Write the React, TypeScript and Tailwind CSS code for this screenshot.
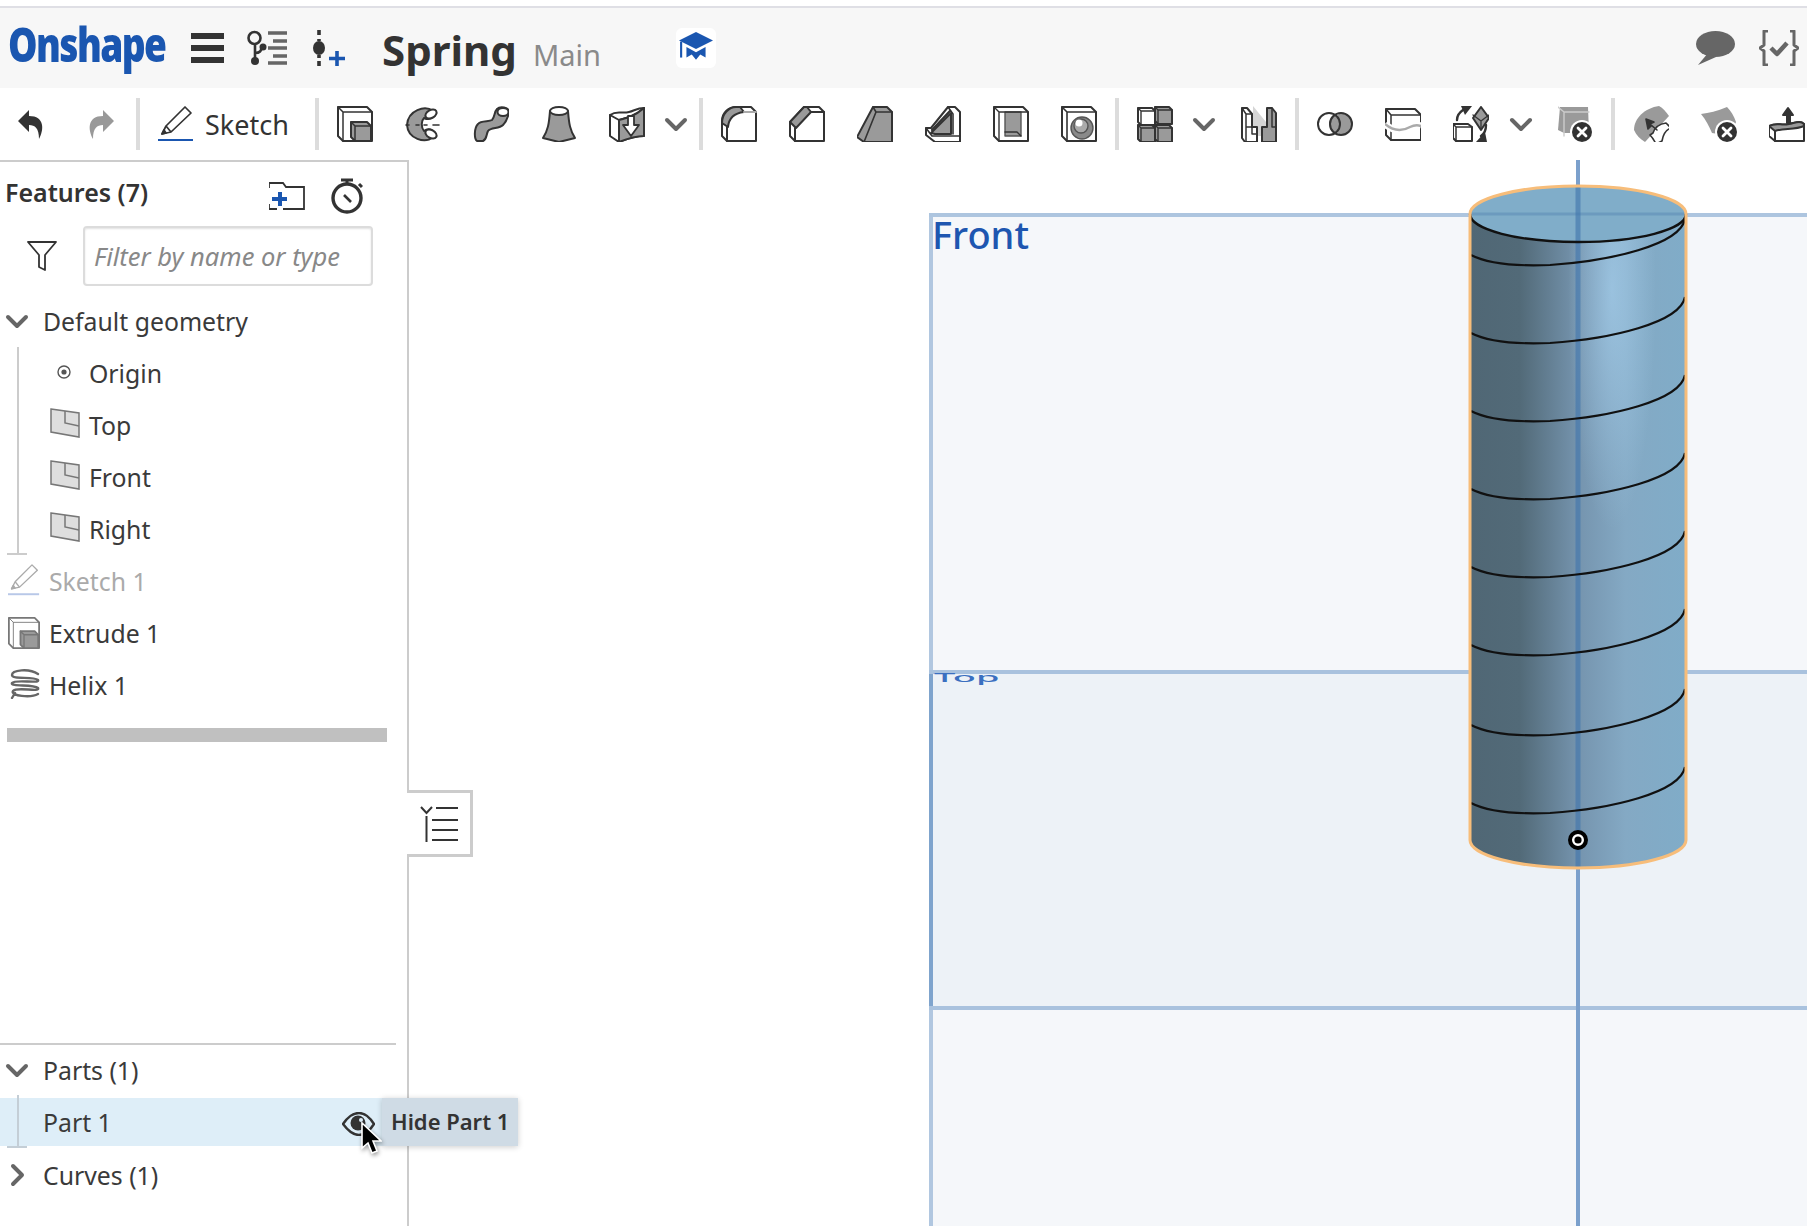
const S = "#333";
const G = "#9a9a9a";

function Ic({ children, w = 36, h = 36, vb = "0 0 36 36" }: { children: React.ReactNode; w?: number; h?: number; vb?: string }) {
  return (
    <svg width={w} height={h} viewBox={vb} fill="none" stroke={S} strokeWidth="2" strokeLinejoin="round" strokeLinecap="round">
      {children}
    </svg>
  );
}

function Slot({ children, className = "" }: { children: React.ReactNode; className?: string }) {
  return <div className={`w-[68px] h-9 shrink-0 flex items-center justify-center ${className}`}>{children}</div>;
}

function Sep({ className = "" }: { className?: string }) {
  return <div className={`w-1 h-[52px] shrink-0 bg-[#dcdcdc] ${className}`} />;
}

function Chev({ size = 30, className = "" }: { size?: number; className?: string }) {
  return (
    <svg width={size} height={size} viewBox="0 0 30 30" fill="none" className={`shrink-0 ${className}`}>
      <path d="M6 11l9 9 9-9" stroke="#666" strokeWidth="4" strokeLinecap="round" strokeLinejoin="round" />
    </svg>
  );
}

function ExtrudeIcon({ size = 36, light = false }: { size?: number; light?: boolean }) {
  const c = light ? "#777" : S;
  return (
    <Ic w={size} h={size}>
      <g stroke={c}>
        <path d="M6 35 L1 30 V1 H30 L35 6 V35 Z" fill="#fff" />
        <path d="M1 1 L6 6 H35 M6 6 V35" strokeWidth={light ? 1 : 1.5} />
        <path d="M14 16 H30 L34 20 V35 H18 L14 31 Z" fill={G} />
        <path d="M14 16 L18 20 H34 M18 20 V35" strokeWidth="1.5" />
      </g>
    </Ic>
  );
}

function RevolveIcon() {
  return (
    <Ic>
      <path d="M28 5 C20 -1 3 4 2 19 C3 33 20 38 28 31 C33 25 24 21 19 25 C16 21 16 15 19 12 C25 15 34 10 28 5 Z" fill={G} />
      <ellipse cx="26" cy="8" rx="6" ry="4" fill="#fff" transform="rotate(-30 26 8)" />
      <ellipse cx="26" cy="28" rx="6" ry="4" fill="#fff" transform="rotate(30 26 28)" />
      <path d="M1 19 H4 M11 19 H14 M19 19 H22 M28 19 H34" strokeWidth="1.6" />
    </Ic>
  );
}

function SweepIcon() {
  return (
    <Ic>
      <path d="M4 35 C1 33 1 22 5 18 C8 14 16 16 19 14 C22 11 21 6 24 3 C27 0 36 1 36 6 C35 11 33 16 30 19 C26 23 18 21 15 25 C13 29 14 33 10 35 Z" fill={G} />
      <ellipse cx="30" cy="6" rx="5.5" ry="4" fill="#fff" />
    </Ic>
  );
}

function LoftIcon() {
  return (
    <Ic>
      <path d="M9 5 C8 18 7 24 2 32 L18 36 L34 32 C29 24 28 18 27 5 Z" fill={G} />
      <ellipse cx="18" cy="5" rx="9" ry="4" fill="#fff" />
    </Ic>
  );
}

function ThickenIcon() {
  return (
    <Ic>
      <path d="M1 9 L10 14 C18 12 26 10 35 2 V30 C28 30 20 32 10 36 L1 30 Z" fill="#fff" />
      <path d="M10 14 C18 12 26 10 35 2 V30 C28 30 20 32 10 36 Z" fill={G} />
      <path d="M1 9 C8 4 12 8 20 6 C25 5 28 2 35 2" />
      <path d="M19 10 H25 V19 H30 L22 30 L14 19 H19 Z" fill="#fff" strokeWidth="1.8" />
    </Ic>
  );
}

function FilletIcon() {
  return (
    <Ic>
      <path d="M6 35 L1 30 V15 C1 6 8 1 15 1 H30 L35 6 V35 Z" fill="#fff" />
      <path d="M1 17 C1 8 8 1 15 1 H19 L23 6 C14 7 8 11 7 21 Z" fill={G} />
      <path d="M6 35 V21" />
      <path d="M23 6 H35" stroke="#aaa" />
    </Ic>
  );
}

function ChamferIcon() {
  return (
    <Ic>
      <path d="M6 35 L1 30 V16 L15 1 H30 L35 6 V35 Z" fill="#fff" />
      <path d="M1 16 L15 1 H18 L22 6 L7 22 Z" fill={G} />
      <path d="M6 35 V22 M22 6 H35" />
    </Ic>
  );
}

function DraftIcon() {
  return (
    <Ic>
      <path d="M0 31 L16 1 H30 L35 6 V36 H7 Z" fill={G} />
      <path d="M7 36 L19 6 H35 M16 1 L19 6" strokeWidth="1.6" />
    </Ic>
  );
}

function RibIcon() {
  return (
    <Ic>
      <path d="M10 36 L1 29 V22 H6 L23 1 H30 L35 6 V36 Z" fill="#fff" />
      <path d="M6 27 L26 7 V28 H10 Z" fill={G} />
      <path d="M23 1 L28 8 V28 M1 22 L7 30 H35" strokeWidth="1.6" />
      <path d="M7 24 L25 5" strokeWidth="2.4" />
    </Ic>
  );
}

function ShellIcon() {
  return (
    <Ic>
      <path d="M6 35 L1 30 V1 H30 L35 6 V35 Z" fill="#fff" />
      <path d="M12 6 H28 V30 H12 Z" fill={G} stroke="#555" strokeWidth="1.4" />
      <path d="M1 1 L6 6 H35 M6 6 V35 M28 30 L24 26 H12" strokeWidth="1.4" />
    </Ic>
  );
}

function HoleIcon() {
  return (
    <Ic>
      <path d="M6 35 L1 30 V1 H30 L35 6 V35 Z" fill="#fff" />
      <path d="M1 1 L6 6 H35 M6 6 V35" strokeWidth="1.6" />
      <circle cx="21" cy="22" r="11" fill="#8a8a8a" stroke="#555" strokeWidth="1.4" />
      <circle cx="20" cy="20" r="7" fill="#aaa" stroke="#555" strokeWidth="1.4" />
      <circle cx="18" cy="17" r="3.5" fill="#fff" stroke="none" />
    </Ic>
  );
}

function PatternIcon() {
  const cube = (x: number, y: number, fill: string) => (
    <g key={`${x}${y}`} transform={`translate(${x} ${y})`}>
      <path d="M3 17 L0 14 V0 H14 L17 3 V17 Z" fill={fill} />
      <path d="M0 0 L3 3 H17 M3 3 V17" strokeWidth="1.4" />
    </g>
  );
  return <Ic>{[cube(1, 2, "#fff"), cube(18, 1, G), cube(1, 19, G), cube(18, 19, G)]}</Ic>;
}

function MirrorIcon() {
  return (
    <Ic>
      <path d="M12 0 L25 16 V30 H12 Z" fill="#d5d5d5" stroke="none" />
      <path d="M4 36 L1 32 V2 H6 L11 8 V21 H16 V36 Z" fill="#fff" />
      <path d="M1 2 L5 8 H11 M5 8 V36 M5 21 H11 M11 21 V28 H16" strokeWidth="1.5" />
      <path d="M21 36 V21 H26 V2 H31 L35 7 V36 Z" fill={G} />
      <path d="M31 2 V21 H35" strokeWidth="1.5" />
    </Ic>
  );
}

function BooleanIcon() {
  return (
    <Ic>
      <path d="M18 8 C22 10 24 14 24 18 C24 22 22 26 18 28 C14 26 12 22 12 18 C12 14 14 10 18 8 Z" fill={G} stroke="none" />
      <path d="M24 7 A11 11 0 0 1 24 29 C20 27 18 23 18 18 C18 13 20 9 24 7 Z" fill={G} stroke="none" />
      <circle cx="12" cy="18" r="11" />
      <circle cx="24" cy="18" r="11" />
    </Ic>
  );
}

function SplitIcon() {
  return (
    <Ic>
      <path d="M6 34 L1 29 V3 H30 L36 9 V34 Z" fill="#fff" />
      <path d="M1 3 L6 9 H36 M6 9 V34" strokeWidth="1.5" />
      <path d="M0 18 C10 27 20 24 25 21 C29 19 33 19 36 20" stroke="#fff" strokeWidth="7" strokeLinecap="butt" />
      <path d="M0 18 C10 27 20 24 25 21 C29 19 33 19 36 20" stroke="#aaa" strokeWidth="2.4" />
    </Ic>
  );
}

function TransformIcon() {
  return (
    <Ic>
      <path d="M20 12 L28 1 L36 12 L28 24 Z" fill={G} />
      <path d="M20 9 L28 15 L36 9 M28 15 V22" strokeWidth="1.3" />
      <path d="M3 35 L0 32 V18 H15 L19 21 V35 Z" fill="#fff" />
      <path d="M0 18 L3 21 H19 M3 21 V35" strokeWidth="1.5" />
      <path d="M4 14 C4 9 7 6 10 4" strokeWidth="2.4" />
      <path d="M8 0 H19 L12 9 Z" fill={S} stroke="none" />
      <path d="M33 19 C33 25 31 28 28 30" strokeWidth="2.4" />
      <path d="M23 36 H34 L32 26 Z" fill={S} stroke="none" />
    </Ic>
  );
}

function XBadge({ cx, cy, r = 10 }: { cx: number; cy: number; r?: number }) {
  return (
    <g>
      <circle cx={cx} cy={cy} r={r + 2} fill="#fff" stroke="none" />
      <circle cx={cx} cy={cy} r={r} fill="#333" stroke="none" />
      <path d={`M${cx - 4} ${cy - 4}l8 8M${cx + 4} ${cy - 4}l-8 8`} stroke="#fff" strokeWidth="2.8" />
    </g>
  );
}

function DeleteIcon() {
  return (
    <Ic>
      <path d="M2 1 H30 L31 27 H6 L0 24 Z" fill={G} stroke="none" />
      <path d="M0 1 L6 6 H31 M6 6 V30" stroke="#ccc" strokeWidth="1.4" />
      <XBadge cx={24} cy={26} />
    </Ic>
  );
}

function ModifyFaceIcon() {
  return (
    <Ic>
      <path d="M1 24 C1 12 12 2 26 0 C30 2 33 6 36 10 L12 36 C7 33 3 29 1 24 Z" fill={G} stroke="none" />
      <path d="M20 27 C22 21 26 18 33 17 L38 22 C32 24 30 29 29 35 L23 38 C21 34 19 31 17 29 Z" fill="#fff" strokeWidth="1.6" />
      <path d="M24 24 L17 18 L21 16 L13 13 L15 23 L18 20" fill={S} strokeWidth="1.6" />
    </Ic>
  );
}

function DeleteFaceIcon() {
  return (
    <Ic>
      <path d="M0 8 C8 7 16 5 26 1 C30 5 33 10 35 16 L30 30 L11 27 C8 20 5 14 0 8 Z" fill={G} stroke="none" />
      <XBadge cx={26} cy={26} />
    </Ic>
  );
}

function MoveFaceIcon() {
  return (
    <Ic>
      <path d="M0 20 C8 16 12 20 20 18 C26 17 31 14 35 18 V35 H6 L0 30 Z" fill="#fff" />
      <path d="M0 20 L6 25 C14 22 26 24 35 20 V18 C31 14 26 17 20 18 C12 20 8 16 0 20 Z" fill={G} />
      <path d="M6 25 V35" />
      <path d="M18 17 V9 H14 L19 2 L24 9 H21 V17 Z" fill={S} />
    </Ic>
  );
}

function PencilIcon({ color = S, line = "#1a56b0", size = 36, width = 1.7 }: { color?: string; line?: string; size?: number; width?: number }) {
  return (
    <svg width={size} height={size} viewBox="0 0 36 36" fill="none" stroke={color} strokeWidth={width} strokeLinejoin="round">
      <path d="M4 28 L8 20 L27 1 L33 7 L13 26 Z" />
      <path d="M8 20 L13 26" />
      <path d="M4 28 L6 24 L8 27 Z" fill={color} />
      <path d="M0 34 H35" stroke={line} strokeWidth="2.2" />
    </svg>
  );
}

function PlaneIcon() {
  return (
    <svg width="30" height="30" viewBox="0 0 30 30">
      <path d="M1 1 L29 5 V29 L1 24 Z" fill="#dedede" stroke="#777" strokeWidth="1.5" />
      <path d="M15 3 V15 L29 18" fill="none" stroke="#777" strokeWidth="1.5" />
    </svg>
  );
}

function HelixIcon() {
  return (
    <svg width="32" height="30" viewBox="0 0 32 30" fill="none" stroke="#666" strokeWidth="2.4" strokeLinecap="round">
      <path d="M29 5 C20 -1 3 1 3 6 C3 11 24 7 29 11 C31 15 6 10 3 14 C1 18 24 15 29 19 C31 24 8 17 4 22 C1 27 22 29 29 25 M3 29 L6 24" />
    </svg>
  );
}

function TreeRow({ label, icon }: { label: string; icon?: React.ReactNode }) {
  return (
    <div className="h-[52px] flex items-center">
      {icon}
      <span>{label}</span>
    </div>
  );
}

function TreeLine() {
  return (
    <>
      <div className="absolute left-[17px] top-0 bottom-0 w-[2px] bg-[#ccc]" />
      <div className="absolute left-[7px] bottom-0 w-[20px] h-[2px] bg-[#ccc]" />
    </>
  );
}

function Viewport() {
  const lefts = [255, 333, 411, 489, 567, 645, 725, 803];
  return (
    <svg className="flex-1 h-full" viewBox="409 160 1398 1066" preserveAspectRatio="xMinYMin slice">
      <defs>
        <linearGradient id="cyl" x1="1470" x2="1686" y1="0" y2="0" gradientUnits="userSpaceOnUse">
          <stop offset="0" stopColor="#506775" />
          <stop offset="0.23" stopColor="#526a78" />
          <stop offset="0.5" stopColor="#7594ae" />
          <stop offset="0.72" stopColor="#84a9c4" />
          <stop offset="1" stopColor="#80acc8" />
        </linearGradient>
        <radialGradient id="shine" cx="1612" cy="290" r="1" gradientUnits="userSpaceOnUse" gradientTransform="translate(1612 290) scale(44 240) translate(-1612 -290)">
          <stop offset="0" stopColor="#b4e0ff" stopOpacity="0.5" />
          <stop offset="1" stopColor="#b4e0ff" stopOpacity="0" />
        </radialGradient>
      </defs>
      <rect x="931" y="215" width="900" height="1020" fill="#f5f7fa" />
      <rect x="931" y="672" width="900" height="336" fill="#edf2f7" />
      <path d="M931 213 V1230" stroke="#b1c7e0" strokeWidth="4" />
      <path d="M931 672 V1009" stroke="#7fa4cd" strokeWidth="4" />
      <path d="M929 215 H1810" stroke="#adc5df" strokeWidth="4" />
      <path d="M929 672 H1810" stroke="#a9c2de" strokeWidth="4" />
      <path d="M929 1008 H1810" stroke="#a9c2de" strokeWidth="4" />
      <path d="M1578 160 V1230" stroke="#7ba0cc" strokeWidth="4" />
      <text x="932" y="249" fontFamily="'Noto Sans', sans-serif" fontSize="38" fontWeight="500" fill="#1e56b0">Front</text>
      <text transform="translate(934 682) scale(1 0.32)" fontFamily="'Noto Sans', sans-serif" fontSize="38" fontWeight="500" fill="#3a6fc0">Top</text>

      <path d="M1470 214 A108 28 0 0 1 1686 214 V840 A108 28 0 0 1 1470 840 Z" fill="url(#cyl)" />
      <rect x="1540" y="220" width="146" height="500" fill="url(#shine)" />
      <ellipse cx="1578" cy="214" rx="108" ry="28" fill="#80adc9" />
      <path d="M1470 214 H1686" stroke="#5f8fb8" strokeWidth="3" opacity="0.6" />
      <path d="M1578 186 V868" stroke="#3f74ac" strokeWidth="5" opacity="0.6" />
      <path d="M1470 214 A108 28 0 0 0 1686 214" fill="none" stroke="#111" strokeWidth="2.4" />
      {lefts.map((l) => (
        <path key={l} d={`M1471 ${l} C1490 ${l + 10} 1525 ${l + 11} 1550 ${l + 10} C1610 ${l + 6} 1680 ${l - 10} 1685 ${l - 36}`} fill="none" stroke="#111" strokeWidth="2.2" />
      ))}
      <path d="M1470 214 A108 28 0 0 1 1686 214 V840 A108 28 0 0 1 1470 840 Z" fill="none" stroke="#f7bd7a" strokeWidth="3" />
      <circle cx="1578" cy="840" r="8" fill="#fff" stroke="#000" strokeWidth="4" />
      <circle cx="1578" cy="840" r="3.6" fill="#000" />
    </svg>
  );
}

export default function App() {
  return (
    <div className="w-[1807px] h-[1226px] overflow-hidden bg-white flex flex-col text-[#333]" style={{ fontFamily: "'Noto Sans', sans-serif" }}>
      <div className="h-[8px] shrink-0 border-b-2 border-[#dfdfe5] pt-[6px] box-border" />

      {/* top bar */}
      <header className="h-[80px] shrink-0 bg-[#f7f7f7] flex items-center relative">
        <div className="w-[191px] pl-[8px] shrink-0">
          <span className="block origin-left scale-x-[0.79] text-[47px] leading-none font-extrabold tracking-[-2px] text-[#1a56b0] -mt-[8px]" style={{ fontFamily: "'Open Sans', sans-serif" }}>Onshape</span>
        </div>
        <svg width="33" height="30" viewBox="0 0 33 30" className="shrink-0" fill="#333">
          <rect width="33" height="6" />
          <rect y="12" width="33" height="6" />
          <rect y="24" width="33" height="6" />
        </svg>
        <svg width="40" height="36" viewBox="0 0 40 36" className="ml-[23px] shrink-0" fill="none">
          <circle cx="7.5" cy="8" r="6" stroke="#333" strokeWidth="2.6" />
          <path d="M8 14 V28 M8 23 C14 23 14 20 15 17" stroke="#333" strokeWidth="2.6" />
          <circle cx="8" cy="31" r="4" fill="#333" />
          <circle cx="16" cy="17" r="3.5" fill="#333" />
          <path d="M21 3 H40 M26 11 H40 M21 18 H40 M26 26 H40 M21 33 H40" stroke="#666" strokeWidth="3.4" />
        </svg>
        <svg width="32" height="36" viewBox="0 0 32 36" className="ml-[26px] shrink-0" fill="none">
          <path d="M6 0 V5 M6 9 V11 M6 25 V28 M6 31 V36" stroke="#333" strokeWidth="3.6" />
          <ellipse cx="6" cy="18" rx="6" ry="7" fill="#333" />
          <path d="M24 21 V36 M16 28.500 H32" stroke="#1a56b0" strokeWidth="3.6" />
        </svg>
        <span className="ml-[37px] text-[42px] leading-none font-bold text-[#333] mt-[3px]">Spring</span>
        <span className="ml-[16px] text-[29px] leading-none text-[#8a8a8a] mt-[12px]">Main</span>
        <div className="ml-[75px] w-[40px] h-[40px] rounded-md bg-white flex items-center justify-center">
          <svg width="34" height="32" viewBox="0 0 32 30" fill="#1a56b0">
            <path d="M16 0 L32 8 L16 16 L0 8 Z" />
            <path d="M7 14 L16 19 L25 14 V24 L20 21 L16 26 L12 21 L7 24 Z" />
            <path d="M2 9 V24" stroke="#1a56b0" strokeWidth="2" />
          </svg>
        </div>
        <div className="ml-auto flex items-center pr-2">
          <svg width="39" height="34" viewBox="0 0 39 34" fill="#666">
            <ellipse cx="19.500" cy="13" rx="19.500" ry="13" />
            <path d="M12 22 L2 34 L20 26 Z" />
          </svg>
          <svg width="40" height="36" viewBox="0 0 40 36" fill="none" className="ml-[24px]" stroke="#666" strokeWidth="3">
            <path d="M9 1 H5 V15 L1 18 L5 21 V35 H9 M31 1 H35 V15 L39 18 L35 21 V35 H31" strokeLinejoin="round" />
            <path d="M12 18 L18 24 L28 13" strokeWidth="4.500" strokeLinejoin="round" />
          </svg>
        </div>
      </header>

      {/* toolbar */}
      <div className="h-[72px] shrink-0 flex items-center overflow-hidden">
        <div className="w-16 shrink-0 flex justify-center">
          <svg width="30" height="32" viewBox="0 0 30 32" fill="#333"><path d="M12 2 L1 13 L12 24 V17 C18 17 22 20 22 31 C27 22 28 8 12 8 Z" /></svg>
        </div>
        <div className="w-[72px] shrink-0 flex justify-center">
          <svg width="30" height="32" viewBox="0 0 30 32" fill="#999"><path d="M18 2 L29 13 L18 24 V17 C12 17 8 20 8 31 C3 22 2 8 18 8 Z" /></svg>
        </div>
        <Sep />
        <div className="w-[175px] shrink-0 flex items-center pl-[18px] gap-[11px] text-[27px] leading-none text-[#333]">
          <PencilIcon />
          <span>Sketch</span>
        </div>
        <Sep className="mr-[2px]" />
        <Slot><ExtrudeIcon /></Slot>
        <Slot><RevolveIcon /></Slot>
        <Slot><SweepIcon /></Slot>
        <Slot><LoftIcon /></Slot>
        <Slot><ThickenIcon /></Slot>
        <Chev />
        <Sep className="ml-[8px] mr-[2px]" />
        <Slot><FilletIcon /></Slot>
        <Slot><ChamferIcon /></Slot>
        <Slot><DraftIcon /></Slot>
        <Slot><RibIcon /></Slot>
        <Slot><ShellIcon /></Slot>
        <Slot><HoleIcon /></Slot>
        <Sep className="ml-[2px] mr-[2px]" />
        <Slot><PatternIcon /></Slot>
        <Chev />
        <Slot className="ml-[6px]"><MirrorIcon /></Slot>
        <Sep className="ml-[2px] mr-[2px]" />
        <Slot><BooleanIcon /></Slot>
        <Slot><SplitIcon /></Slot>
        <Slot><TransformIcon /></Slot>
        <Chev className="ml-[1px]" />
        <Slot className="ml-[6px]"><DeleteIcon /></Slot>
        <Sep className="ml-[1px] mr-[2px]" />
        <Slot><ModifyFaceIcon /></Slot>
        <Slot><DeleteFaceIcon /></Slot>
        <Slot><MoveFaceIcon /></Slot>
      </div>

      <div className="flex-1 flex min-h-0">
        {/* features panel */}
        <aside className="w-[409px] shrink-0 border-t-2 border-r-2 border-[#ccc] relative flex flex-col text-[24.800px] leading-none text-[#3a3a3a]">
          <div className="h-[64px] shrink-0 flex items-center pl-[5px]">
            <span className="text-[25px] font-semibold text-[#333] -mt-[4px]">Features (7)</span>
            <svg width="36" height="28" viewBox="0 0 36 28" fill="none" className="absolute left-[269px] top-[20px]">
              <path d="M0 6 V1 H14 L17 5 H35 V27 H14 M8 27 H0 V22" stroke="#333" strokeWidth="1.8" />
              <path d="M11 10 V24 M3 17 H18" stroke="#1a56b0" strokeWidth="4" />
            </svg>
            <svg width="32" height="36" viewBox="0 0 32 36" fill="none" className="absolute left-[331px] top-[16px]" stroke="#333">
              <circle cx="16" cy="20" r="14" strokeWidth="3.4" />
              <path d="M10 2 H22 M16 2 V6 M28 6 L31 9" strokeWidth="3" />
              <path d="M13 17 L20 24" strokeWidth="2.6" />
            </svg>
          </div>
          <div className="h-[60px] shrink-0 flex items-center">
            <svg width="30" height="30" viewBox="0 0 30 30" fill="none" stroke="#333" strokeWidth="1.8" className="ml-[27px]" strokeLinejoin="round">
              <path d="M1 1 H29 L18 14 V29 L12 26 V14 Z" />
            </svg>
            <div className="ml-[26px] w-[290px] h-[60px] rounded-[4px] border-2 border-[#dcdcdc] shadow-[inset_0_1px_2px_rgba(0,0,0,0.12)] flex items-center pl-[9px] pt-[2px] italic text-[25.500px] text-[#888] bg-white">
              Filter by name or type
            </div>
          </div>

          <div className="mt-[9px]">
            <TreeRow label="Default geometry" icon={<Chev className="ml-[2px] mr-[11px]" />} />
            <div className="relative h-[208px]">
              <TreeLine />
              <TreeRow label="Origin" icon={
                <svg width="14" height="14" viewBox="0 0 14 14" fill="none" className="ml-[57px] mr-[18px] -mt-[3px]"><circle cx="7" cy="7" r="6" stroke="#555" strokeWidth="1.4" /><circle cx="7" cy="7" r="2.6" fill="#555" /></svg>
              } />
              <TreeRow label="Top" icon={<span className="ml-[50px] mr-[9px] -mt-[5px]"><PlaneIcon /></span>} />
              <TreeRow label="Front" icon={<span className="ml-[50px] mr-[9px] -mt-[5px]"><PlaneIcon /></span>} />
              <TreeRow label="Right" icon={<span className="ml-[50px] mr-[9px] -mt-[5px]"><PlaneIcon /></span>} />
            </div>
            <div className="text-[#aaa]">
              <TreeRow label="Sketch 1" icon={<span className="ml-[8px] mr-[9px] -mt-[3px]"><PencilIcon color="#aaa" line="#b8c8e8" size={32} width={1.5} /></span>} />
            </div>
            <TreeRow label="Extrude 1" icon={<span className="ml-[8px] mr-[9px]"><ExtrudeIcon size={32} light /></span>} />
            <TreeRow label="Helix 1" icon={<span className="ml-[9px] mr-[8px] -mt-[2px]"><HelixIcon /></span>} />
          </div>

          <div className="mt-[17px] ml-[7px] w-[380px] h-[14px] shrink-0 bg-[#c0c0c0]" />

          <div className="mt-auto pb-[22px]">
            <div className="h-[2px] w-[396px] bg-[#ccc]" />
            <div className="h-[50px] flex items-center">
              <Chev className="ml-[2px] mr-[11px]" />
              <span>Parts (1)</span>
            </div>
            <div className="relative mt-[3px] h-[48px] bg-[#deeef8] flex items-center pl-[43px]">
              <div className="absolute left-[17px] -top-[3px] -bottom-[1px] w-[2px] bg-[#c4ced6]" />
              <div className="absolute left-[7px] -bottom-[2px] w-[20px] h-[2px] bg-[#c4ced6]" />
              <span>Part 1</span>
              <svg width="33" height="24" viewBox="0 0 33 24" className="absolute left-[342px] top-[14px]" fill="none">
                <path d="M1 12 C7 3 13 1 17 1 C22 1 27 4 32 12 C27 20 22 23 17 23 C12 23 7 20 1 12 Z" stroke="#333" strokeWidth="2.4" />
                <circle cx="16" cy="11" r="7.500" fill="#333" />
                <circle cx="19" cy="8" r="2" fill="#deeef8" />
              </svg>
            </div>
            <div className="h-[58px] flex items-center">
              <Chev className="ml-[2px] mr-[11px] -rotate-90" />
              <span>Curves (1)</span>
            </div>
          </div>

          {/* collapse tab */}
          <div className="absolute left-[407px] top-[628px] w-[66px] h-[67px] bg-white border-y-[3px] border-r-[3px] border-[#ccc] flex items-center justify-center z-10">
            <svg width="38" height="36" viewBox="0 0 38 36" fill="none" stroke="#333" strokeWidth="2">
              <path d="M1 1 L6.500 7 L12 1" />
              <path d="M6.500 10 V36" />
              <path d="M16 2 H38 M12 14 H38 M12 24 H38 M12 34 H38" />
            </svg>
          </div>

          {/* tooltip */}
          <div className="absolute left-[382px] top-[936px] w-[136px] h-[48px] z-20 bg-[#cfdbe5] shadow-[0_1px_6px_rgba(0,0,0,0.2)] flex items-center pl-[9px] pb-[2px] text-[22px] font-semibold text-[#333] whitespace-nowrap">
            Hide Part 1
          </div>
          <svg width="22" height="34" viewBox="0 0 22 34" className="absolute left-[360px] top-[960px] z-30 drop-shadow-[1px_2px_2px_rgba(0,0,0,0.4)]">
            <path d="M2 1 V26 L8 21 L12 31 L17 29 L13 19 L21 19 Z" fill="#000" stroke="#fff" strokeWidth="1.6" />
          </svg>
        </aside>

        <Viewport />
      </div>
    </div>
  );
}
